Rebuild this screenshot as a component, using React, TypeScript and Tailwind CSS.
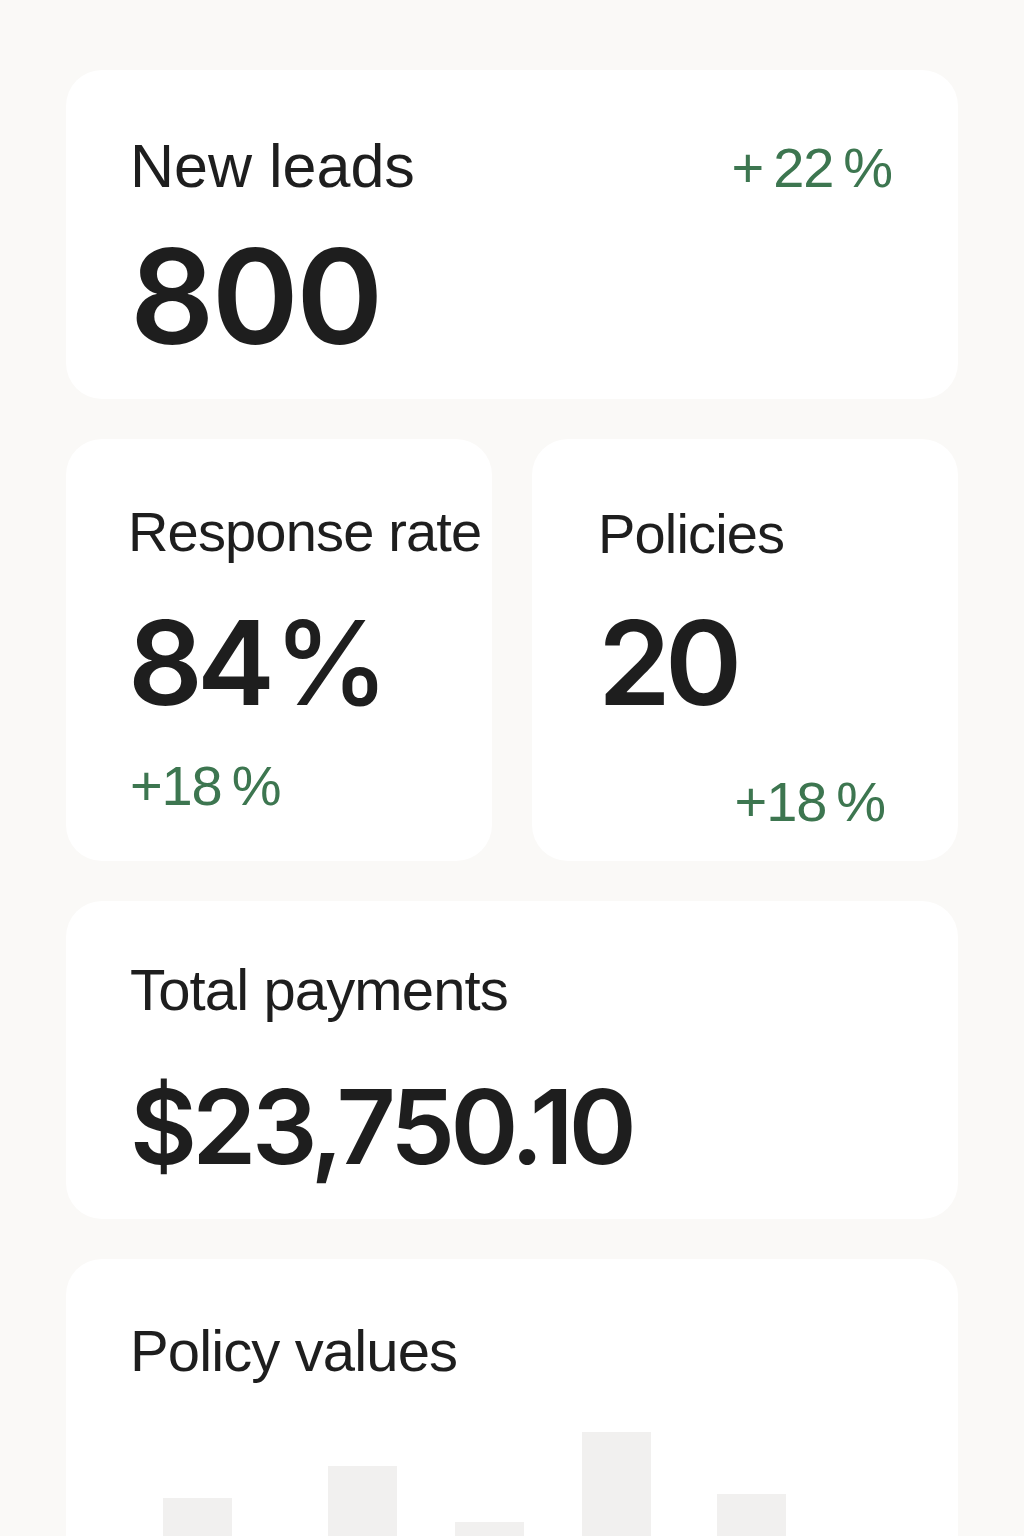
const bars = [
  { ml: "ml-[33px]", h: "h-[79px]" },
  { ml: "ml-[96px]", h: "h-[111px]" },
  { ml: "ml-[58px]", h: "h-[55px]" },
  { ml: "ml-[58px]", h: "h-[145px]" },
  { ml: "ml-[66px]", h: "h-[83px]" },
];

const numFont = { fontFamily: 'Inter, "Liberation Sans", sans-serif' };

function Label({ children, className = "" }: { children: React.ReactNode; className?: string }) {
  return <div className={`leading-none text-[#1e1e1e] ${className}`}>{children}</div>;
}

function Delta({ children, className = "" }: { children: React.ReactNode; className?: string }) {
  return (
    <div className={`text-[56px] leading-none tracking-[-0.02em] text-[#3d7650] ${className}`}>{children}</div>
  );
}

export default function App() {
  return (
    <div
      className="h-[1536px] overflow-hidden bg-[#faf9f7] px-[66px] pt-[70px] flex flex-col gap-10"
      style={{ fontFamily: '"Liberation Sans", Arial, sans-serif' }}
    >
      {/* New leads */}
      <div className="rounded-[36px] bg-white pl-16 pr-[66px] pt-[66px] pb-[37px]">
        <div className="flex items-start justify-between">
          <Label className="text-[61px]">New leads</Label>
          <Delta className="mt-[4px]">+&#8201;22&#8201;%</Delta>
        </div>
        <div
          className="mt-[33px] text-[132px] font-semibold leading-none tracking-[-0.02em] text-[#1e1e1e]"
          style={numFont}
        >
          800
        </div>
      </div>

      {/* Response rate / Policies */}
      <div className="grid grid-cols-2 gap-10">
        <div className="rounded-[36px] bg-white pl-[62px] pt-[65px] pb-[47px]">
          <Label className="text-[56px] tracking-[-0.015em]">Response rate</Label>
          <div
            className="mt-[44px] text-[117px] font-semibold leading-none tracking-[-0.05em] text-[#1e1e1e]"
            style={numFont}
          >
            84<span className="ml-[4px] font-medium">%</span>
          </div>
          <Delta className="mt-[37px] ml-[2px]">+18&#8201;%</Delta>
        </div>
        <div className="rounded-[36px] bg-white pl-[66px] pr-[73px] pt-[67px] pb-[31px] flex flex-col">
          <Label className="text-[56px] tracking-[-0.015em]">Policies</Label>
          <div
            className="mt-[42px] text-[117px] font-semibold leading-none tracking-[-0.05em] text-[#1e1e1e]"
            style={numFont}
          >
            20
          </div>
          <Delta className="mt-[53px] self-end">+18&#8201;%</Delta>
        </div>
      </div>

      {/* Total payments */}
      <div className="rounded-[36px] bg-white pl-16 pt-[60px] pb-[41px]">
        <Label className="text-[58px] tracking-[-0.015em]">Total payments</Label>
        <div
          className="mt-[56px] text-[103px] font-semibold leading-none tracking-[-0.045em] text-[#1e1e1e]"
          style={numFont}
        >
          $23,750.10
        </div>
      </div>

      {/* Policy values */}
      <div className="rounded-[36px] bg-white pl-16 pt-[63px] pb-10">
        <Label className="text-[58px] tracking-[-0.015em]">Policy values</Label>
        <div className="mt-10 flex h-[157px] items-end">
          {bars.map((b, i) => (
            <div key={i} className={`${b.ml} ${b.h} w-[69px] bg-[#f1f0ef]`} />
          ))}
        </div>
      </div>
    </div>
  );
}
